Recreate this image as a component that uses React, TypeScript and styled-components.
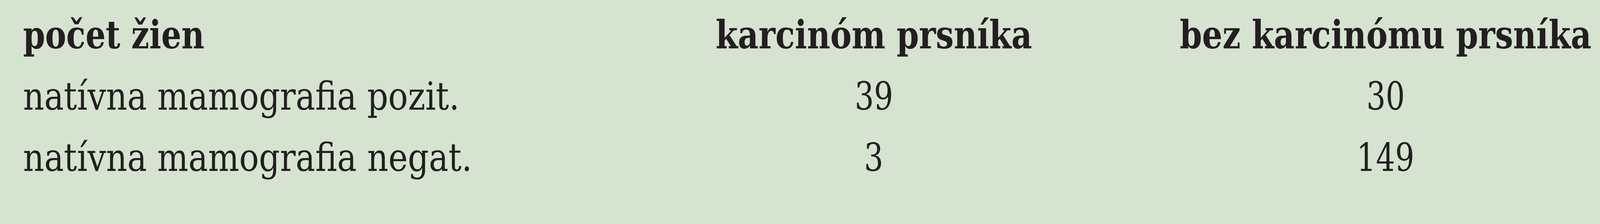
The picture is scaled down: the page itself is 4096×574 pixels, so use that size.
import styled, { createGlobalStyle } from "styled-components";

const GlobalStyle = createGlobalStyle`
    html, body {
        margin: 0;
        padding: 0;
        background: #d5e3d0;
    }
`;

const Panel = styled.section`
    width: 4096px;
    height: 574px;
    box-sizing: border-box;
    padding: 11px 0 0 59px;
    background: #d5e3d0;
    color: #231f20;
    font-family: "DejaVu Serif Condensed", "DejaVu Serif", serif;
    font-stretch: condensed;
    overflow: hidden;
`;

const Row = styled.div`
    display: grid;
    grid-template-columns: 1417px 1522px 1098px;
    height: 157px;
    line-height: 157px;
    font-size: 100px;
    white-space: nowrap;
`;

const Cell = styled.div<{ $head?: boolean; $center?: boolean }>`
    display: flex;
    justify-content: ${(p) => (p.$center ? "center" : "flex-start")};
    font-weight: ${(p) => (p.$head ? 700 : 400)};
`;

// the print face is narrower than any installed slab serif, so squeeze it
const Text = styled.span<{ $squeeze: number; $center?: boolean }>`
    flex: none;
    display: inline-block;
    transform: scaleX(${(p) => p.$squeeze});
    transform-origin: ${(p) => (p.$center ? "center" : "left")} center;
`;

const rows = [
    ["natívna mamografia pozit.", "39", "30"],
    ["natívna mamografia negat.", "3", "149"],
];

export default function App() {
    return (
        <>
            <GlobalStyle />
            <Panel>
                <Row>
                    <Cell $head>
                        <Text $squeeze={0.9}>počet žien</Text>
                    </Cell>
                    <Cell $head $center>
                        <Text $squeeze={0.91} $center>karcinóm prsníka</Text>
                    </Cell>
                    <Cell $head $center>
                        <Text $squeeze={0.91} $center>bez karcinómu prsníka</Text>
                    </Cell>
                </Row>
                {rows.map((r) => (
                    <Row key={r[0]}>
                        <Cell>
                            <Text $squeeze={0.935}>{r[0]}</Text>
                        </Cell>
                        <Cell $center>
                            <Text $squeeze={0.86} $center>{r[1]}</Text>
                        </Cell>
                        <Cell $center>
                            <Text $squeeze={0.86} $center>{r[2]}</Text>
                        </Cell>
                    </Row>
                ))}
            </Panel>
        </>
    );
}
